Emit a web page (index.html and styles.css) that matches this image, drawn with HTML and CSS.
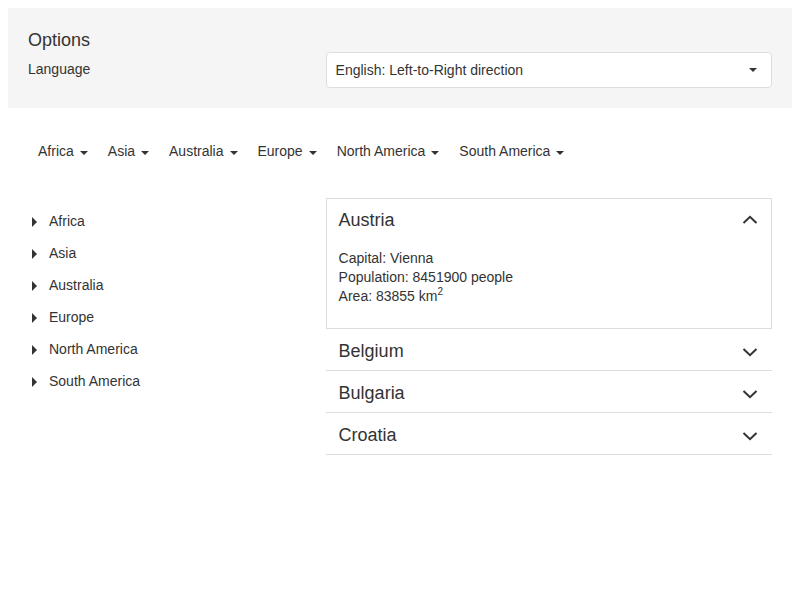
FILE: index.html
```html
<!DOCTYPE html>
<html>
<head>
<meta charset="utf-8">
<link rel="stylesheet" href="styles.css">
</head>
<body>
<div class="options">
  <div class="options-title">Options</div>
  <div class="options-row">
    <div class="label">Language</div>
    <div class="select">
      <span>English: Left-to-Right direction</span>
      <span class="caret"></span>
    </div>
  </div>
</div>

<div class="content">
  <nav class="nav">
    <span class="nav-item">Africa<span class="caret"></span></span>
    <span class="nav-item">Asia<span class="caret"></span></span>
    <span class="nav-item">Australia<span class="caret"></span></span>
    <span class="nav-item">Europe<span class="caret"></span></span>
    <span class="nav-item">North America<span class="caret"></span></span>
    <span class="nav-item">South America<span class="caret"></span></span>
  </nav>

  <div class="main">
    <ul class="tree">
      <li><span class="tri"></span>Africa</li>
      <li><span class="tri"></span>Asia</li>
      <li><span class="tri"></span>Australia</li>
      <li><span class="tri"></span>Europe</li>
      <li><span class="tri"></span>North America</li>
      <li><span class="tri"></span>South America</li>
    </ul>

    <div class="accordion">
      <div class="acc-open">
        <div class="acc-head">
          <span>Austria</span>
          <svg class="chev" width="16" height="10" viewBox="0 0 16 10"><polyline points="1.5,8 8,1.8 14.5,8" fill="none" stroke="#333" stroke-width="2"/></svg>
        </div>
        <div class="acc-body">
          <div>Capital: Vienna</div>
          <div>Population: 8451900 people</div>
          <div>Area: 83855 km<sup>2</sup></div>
        </div>
      </div>
      <div class="acc-item">
        <span>Belgium</span>
        <svg class="chev" width="16" height="10" viewBox="0 0 16 10"><polyline points="1.5,2 8,8.2 14.5,2" fill="none" stroke="#333" stroke-width="2"/></svg>
      </div>
      <div class="acc-item">
        <span>Bulgaria</span>
        <svg class="chev" width="16" height="10" viewBox="0 0 16 10"><polyline points="1.5,2 8,8.2 14.5,2" fill="none" stroke="#333" stroke-width="2"/></svg>
      </div>
      <div class="acc-item">
        <span>Croatia</span>
        <svg class="chev" width="16" height="10" viewBox="0 0 16 10"><polyline points="1.5,2 8,8.2 14.5,2" fill="none" stroke="#333" stroke-width="2"/></svg>
      </div>
    </div>
  </div>
</div>
</body>
</html>
```

FILE: styles.css
```css
body {
  margin: 8px;
  font-family: "Liberation Sans", Arial, sans-serif;
  font-size: 14px;
  color: #333;
  background: #fff;
}

.options {
  background: #f5f5f5;
  padding: 20px;
}

.options-title {
  font-size: 18px;
  line-height: 24px;
}

.options-row {
  display: flex;
  align-items: flex-start;
}

.label {
  width: 40%;
  line-height: 20px;
  padding-top: 7px;
}

.select {
  width: 60%;
  box-sizing: border-box;
  height: 36px;
  background: #fff;
  border: 1px solid #ddd;
  border-radius: 4px;
  display: flex;
  align-items: center;
  justify-content: space-between;
  padding: 0 14px 0 9px;
}

.caret {
  display: inline-block;
  width: 0;
  height: 0;
  border-top: 4px solid #333;
  border-left: 4px solid transparent;
  border-right: 4px solid transparent;
}

.content {
  padding: 0 20px;
}

.nav {
  display: flex;
  margin-top: 20px;
  height: 46px;
  align-items: center;
  padding: 0 10px;
  gap: 20px;
}

.nav-item {
  display: inline-flex;
  align-items: center;
  line-height: 20px;
}

.nav-item .caret {
  margin-left: 6px;
  margin-top: 3px;
}

.main {
  display: flex;
  margin-top: 24px;
}

.tree {
  list-style: none;
  margin: 0;
  padding: 7px 0 0 0;
  width: 40%;
}

.tree li {
  height: 32px;
  display: flex;
  align-items: center;
  padding-left: 4px;
}

.tri {
  width: 0;
  height: 0;
  border-left: 5px solid #333;
  border-top: 5px solid transparent;
  border-bottom: 5px solid transparent;
  margin-right: 12px;
  margin-top: 2px;
}

.accordion {
  width: 60%;
}

.acc-open {
  border: 1px solid #ddd;
}

.acc-head {
  height: 42px;
  display: flex;
  align-items: center;
  justify-content: space-between;
  padding: 0 13px 0 12px;
  font-size: 18px;
}

.acc-body {
  padding: 8px 12px 22px;
  line-height: 19px;
}

.acc-body sup {
  font-size: 10px;
  line-height: 0;
  vertical-align: 6px;
}

.acc-item {
  height: 42px;
  box-sizing: border-box;
  border-bottom: 1px solid #ddd;
  display: flex;
  align-items: center;
  justify-content: space-between;
  padding: 4px 14px 0 13px;
  font-size: 18px;
}

.chev {
  display: block;
}
```
